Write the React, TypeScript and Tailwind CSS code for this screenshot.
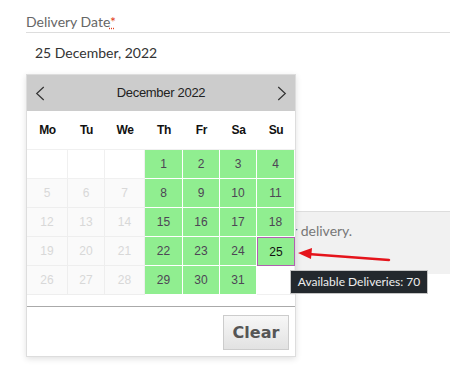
import React from "react";

type Cell = { day?: number; kind: "empty" | "past" | "open" | "picked" };

const COLS = ["Mo", "Tu", "We", "Th", "Fr", "Sa", "Su"];

// December 2022 starts on Thursday; delivery opens on the 1st (Thu) onwards, Mon-Wed blocked
function buildMonth(): Cell[] {
  const cells: Cell[] = [];
  for (let i = 0; i < 3; i++) cells.push({ kind: "empty" });
  for (let d = 1; d <= 31; d++) {
    const col = (d + 2) % 7;
    if (d === 25) cells.push({ day: d, kind: "picked" });
    else if (col < 3) cells.push({ day: d, kind: "past" });
    else cells.push({ day: d, kind: "open" });
  }
  cells.push({ kind: "empty" });
  return cells;
}

function Chevron({ dir }: { dir: "left" | "right" }) {
  return (
    <svg viewBox="0 0 10 16" className="h-[15px] w-[10px]" fill="none" stroke="#333" strokeWidth="1.3">
      {dir === "left" ? <path d="M9 1L1.5 8L9 15" /> : <path d="M1 1L8.5 8L1 15" />}
    </svg>
  );
}

function DayCell({ cell }: { cell: Cell }) {
  const base = "flex h-[29px] items-center justify-center text-[12px]";
  if (cell.kind === "empty")
    return <div className={`${base} border-b border-r border-[#f0f0f0] bg-white`} />;
  if (cell.kind === "past")
    return (
      <div className={`${base} border-b border-r border-[#eeeeee] bg-[#fafafa] text-[#d8d8d8]`}>
        {cell.day}
      </div>
    );
  if (cell.kind === "picked")
    return (
      <div className={`${base} border border-[#b060b0] bg-[#90ee90] text-[#111]`}>{cell.day}</div>
    );
  return (
    <div className={`${base} border-b border-r border-white bg-[#90ee90] text-[#4d4555]`}>
      {cell.day}
    </div>
  );
}

function DatePopup() {
  const cells = buildMonth();
  return (
    <div className="absolute left-[26px] top-[74px] w-[270px] border border-[#dddddd] bg-white font-['Liberation_Sans',Arial,sans-serif] shadow-[0_2px_6px_rgba(0,0,0,0.12)]">
      <div className="flex h-[36px] items-center justify-between bg-[#cccccc] px-[8px]">
        <Chevron dir="left" />
        <span className="text-[13px] tracking-[-0.3px] text-[#222]">December 2022</span>
        <Chevron dir="right" />
      </div>
      <div className="grid h-[38px] grid-cols-[41px_37px_40px_38px_37px_37px_38px] items-center">
        {COLS.map((c) => (
          <span key={c} className="text-center text-[12px] font-bold tracking-[-0.3px] text-[#111]">
            {c}
          </span>
        ))}
      </div>
      <div className="grid grid-cols-[41px_37px_40px_38px_37px_37px_38px] border-t border-[#f0f0f0]">
        {cells.map((cell, i) => (
          <DayCell key={i} cell={cell} />
        ))}
      </div>
      <div className="mt-[11px] flex justify-end border-t border-[#aaaaaa] px-[6px] pb-[6px] pt-[8px]">
        <button
          type="button"
          className="h-[35px] w-[66px] border border-[#cccccc] bg-gradient-to-b from-[#f7f7f7] to-[#e2e2e2] font-['DejaVu_Sans',sans-serif] text-[16px] font-bold text-[#555]"
        >
          Clear
        </button>
      </div>
    </div>
  );
}

export default function App() {
  return (
    <div className="relative h-[380px] w-[450px] overflow-hidden bg-white font-['Lato','Open_Sans',sans-serif]">
      <div className="pl-[26px] pt-[12px]">
        <div className="border-b border-[#dddddd] text-[14px] leading-[20px] text-[#666]">
          Delivery Date
          <abbr className="text-[#e2401c] decoration-dotted [text-decoration-line:underline]" title="required">
            *
          </abbr>
        </div>
        <div className="pl-[9px] pt-[9px] text-[14px] leading-[21px] text-[#333]">25 December, 2022</div>
      </div>

      <div className="ml-[26px] mt-[148px] h-[63px] border-t border-[#dddddd] bg-[#f1f1f1] pl-[130px] pt-[8px] text-[14px] text-[#777]">
        Please select a date for delivery.
      </div>

      <DatePopup />

      <svg className="absolute left-[296px] top-[246px]" width="96" height="18" viewBox="0 0 96 18">
        <path d="M93 14L12 8" stroke="#e5141b" strokeWidth="2.5" strokeLinecap="round" />
        <path d="M2 7L16 2L15 13Z" fill="#e5141b" />
      </svg>

      <div className="absolute left-[290px] top-[270px] flex h-[24px] w-[138px] items-center justify-center border border-[#c5c5c5] bg-[#23282d] text-[12px] text-[#eeeeee]">
        Available Deliveries: 70
      </div>
    </div>
  );
}
